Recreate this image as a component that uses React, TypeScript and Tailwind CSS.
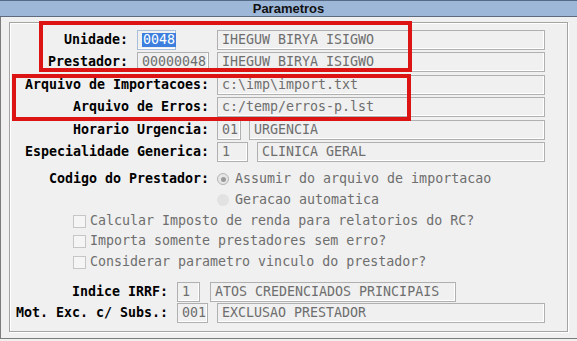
import React from "react";

const mono = "font-['DejaVu_Sans_Mono','Liberation_Mono',monospace]";

function Field({ w, children, selected }: { w: string; children?: React.ReactNode; selected?: boolean }) {
  return (
    <div
      className={`${w} h-[20px] shrink-0 flex items-center pl-[4px] border bg-[#f0f0f0] shadow-[inset_-1px_-1px_0_#fff] ${
        selected ? "border-[#a9bedb]" : "border-[#b0b0b0]"
      }`}
    >
      {selected ? (
        <span className="bg-[#3c7fde] text-white px-[1px] leading-[14px]">{children}</span>
      ) : (
        <span className="text-[#6e6e6e] whitespace-pre">{children}</span>
      )}
    </div>
  );
}

function Label({ w, children }: { w: string; children: React.ReactNode }) {
  return <div className={`${w} shrink-0 text-right font-bold text-black whitespace-pre`}>{children}</div>;
}

function Check({ children, mt }: { children: React.ReactNode; mt: string }) {
  return (
    <div className={`${mt} h-[20px] flex items-center pl-[63px]`}>
      <span className="w-[13px] h-[13px] border border-[#c6c6c6] bg-[#f5f5f5]" />
      <span className="ml-[4px] text-[#6e6e6e] whitespace-pre">{children}</span>
    </div>
  );
}

export default function App() {
  return (
    <div className={`relative w-[577px] h-[341px] bg-[#f0f0f0] overflow-hidden ${mono} text-[13.3px]`}>
      <div className="h-[17px] bg-[#9db7d9] border-t border-t-[#566a88] border-b border-b-[#5e6b7e] flex items-center justify-center font-['Liberation_Sans',Arial,sans-serif] font-bold text-[13px] text-[#111]">
        Parametros
      </div>
      <div className="h-[322px] border-l border-b border-[#7c7c7c] pl-[8px] pt-[5px]">
        <div className="w-[559px] h-[310px] border border-[#a4a4a4] shadow-[inset_1px_1px_0_#fff,1px_1px_0_#fff] flex flex-col">
          <div className="mt-[7px] h-[20px] flex items-center">
            <Label w="w-[118px]">Unidade:</Label>
            <div className="ml-[9px]" />
            <Field w="w-[39px]" selected>0048</Field>
            <div className="w-[41px]" />
            <Field w="w-[328px]">IHEGUW BIRYA ISIGWO</Field>
          </div>
          <div className="mt-[2px] h-[20px] flex items-center">
            <Label w="w-[118px]">Prestador:</Label>
            <div className="ml-[9px]" />
            <Field w="w-[72px]">00000048</Field>
            <div className="w-[8px]" />
            <Field w="w-[328px]">IHEGUW BIRYA ISIGWO</Field>
          </div>
          <div className="mt-[3px] h-[20px] flex items-center">
            <Label w="w-[199px]">Arquivo de Importacoes:</Label>
            <div className="ml-[8px]" />
            <Field w="w-[328px]">c:\imp\import.txt</Field>
          </div>
          <div className="mt-[2px] h-[20px] flex items-center">
            <Label w="w-[199px]">Arquivo de Erros:</Label>
            <div className="ml-[8px]" />
            <Field w="w-[328px]">c:/temp/erros-p.lst</Field>
          </div>
          <div className="mt-[3px] h-[20px] flex items-center">
            <Label w="w-[199px]">Horario Urgencia:</Label>
            <div className="ml-[8px]" />
            <Field w="w-[24px]">01</Field>
            <div className="w-[8px]" />
            <Field w="w-[296px]">URGENCIA</Field>
          </div>
          <div className="mt-[2px] h-[20px] flex items-center">
            <Label w="w-[199px]">Especialidade Generica:</Label>
            <div className="ml-[8px]" />
            <Field w="w-[31px]">1</Field>
            <div className="w-[9px]" />
            <Field w="w-[288px]">CLINICA GERAL</Field>
          </div>
          <div className="mt-[7px] h-[20px] flex items-center">
            <Label w="w-[199px]">Codigo do Prestador:</Label>
            <div className="ml-[8px]" />
            <span className="w-[12px] h-[12px] rounded-full border border-[#b4b4b4] bg-[#e6e6e6] flex items-center justify-center">
              <span className="w-[5px] h-[5px] rounded-full bg-[#9a9a9a]" />
            </span>
            <span className="ml-[6px] text-[#6e6e6e] whitespace-pre">Assumir do arquivo de importacao</span>
          </div>
          <div className="mt-[1px] h-[20px] flex items-center pl-[207px]">
            <span className="w-[12px] h-[12px] rounded-full bg-[#e2e2e2]" />
            <span className="ml-[6px] text-[#6e6e6e] whitespace-pre">Geracao automatica</span>
          </div>
          <Check mt="mt-[1px]">Calcular Imposto de renda para relatorios do RC?</Check>
          <Check mt="mt-0">Importa somente prestadores sem erro?</Check>
          <Check mt="mt-[1px]">Considerar parametro vinculo do prestador?</Check>
          <div className="mt-[10px] h-[20px] flex items-center">
            <Label w="w-[158px]">Indice IRRF:</Label>
            <div className="ml-[9px]" />
            <Field w="w-[23px]">1</Field>
            <div className="w-[10px]" />
            <Field w="w-[246px]">ATOS CREDENCIADOS PRINCIPAIS</Field>
          </div>
          <div className="mt-[1px] h-[20px] flex items-center">
            <Label w="w-[158px]">Mot. Exc. c/ Subs.:</Label>
            <div className="ml-[9px]" />
            <Field w="w-[31px]">001</Field>
            <div className="w-[9px]" />
            <Field w="w-[328px]">EXCLUSAO PRESTADOR</Field>
          </div>
        </div>
      </div>
      <div className="absolute left-[39px] top-[21px] w-[373px] h-[51px] border-4 border-[#dc1414]" />
      <div className="absolute left-[12px] top-[74px] w-[399px] h-[47px] border-4 border-[#dc1414]" />
    </div>
  );
}
